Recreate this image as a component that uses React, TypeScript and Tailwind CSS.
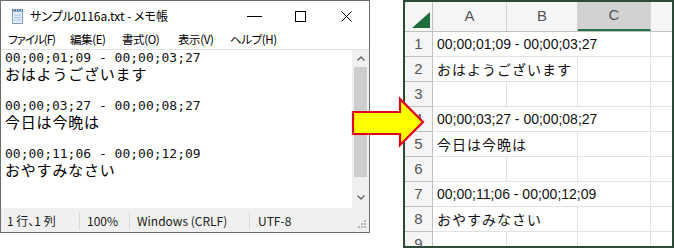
import React from 'react';

const jp = "font-['Noto_Sans_CJK_JP',sans-serif]";
const ui = "font-['Noto_Sans_CJK_JP',sans-serif] [font-feature-settings:'palt']";

const noteLines = [
  { text: '00;00;01;09 - 00;00;03;27', kana: false },
  { text: 'おはようございます', kana: true },
  { text: '', kana: false },
  { text: '00;00;03;27 - 00;00;08;27', kana: false },
  { text: '今日は今晩は', kana: true },
  { text: '', kana: false },
  { text: '00;00;11;06 - 00;00;12;09', kana: false },
  { text: 'おやすみなさい', kana: true },
];

// span = how many columns the text runs over (hides those grid lines)
const sheetRows = [
  { n: 1, text: '00;00;01;09 - 00;00;03;27', span: 3, kana: false },
  { n: 2, text: 'おはようございます', span: 2, kana: true },
  { n: 3, text: '', span: 1, kana: false },
  { n: 4, text: '00;00;03;27 - 00;00;08;27', span: 3, kana: false },
  { n: 5, text: '今日は今晩は', span: 2, kana: true },
  { n: 6, text: '', span: 1, kana: false },
  { n: 7, text: '00;00;11;06 - 00;00;12;09', span: 3, kana: false },
  { n: 8, text: 'おやすみなさい', span: 2, kana: true },
  { n: 9, text: '', span: 1, kana: false },
];

const NotepadIcon = () => (
  <svg width="14" height="16" viewBox="0 0 14 16">
    <path d="M2.5 3.5 L12.5 2.5 L12.5 15.5 L2.5 15.5 Z" fill="#e4eef8" stroke="#7d9cc0" />
    <path d="M4 7h7M4 9.5h7M4 12h7" stroke="#a9c0da" />
    <rect x="2" y="1" width="11" height="2.5" fill="#4d77a6" />
    <path d="M4 0.5v3M6.5 0.5v3M9 0.5v3M11.5 0.5v3" stroke="#c9d6e4" />
  </svg>
);

const Chevron = ({ up }: { up?: boolean }) => (
  <svg width="8" height="5" viewBox="0 0 8 5">
    <path d={up ? 'M0.5 4.5 L4 1 L7.5 4.5' : 'M0.5 0.5 L4 4 L7.5 0.5'} fill="none" stroke="#606060" strokeWidth="1.3" />
  </svg>
);

const Notepad = () => (
  <div className="flex h-[233px] w-[370px] flex-col border border-[#6e6e6e] bg-white">
    {/* title bar */}
    <div className="flex h-[30px] items-center">
      <div className="ml-[9px] flex w-[20px] items-center">
        <NotepadIcon />
      </div>
      <div className={`${ui} text-[12px] text-black`}>サンプル0116a.txt - メモ帳</div>
      <div className="ml-auto flex h-full">
        <div className="flex h-full w-[46px] items-center justify-center">
          <div className="h-px w-[15px] bg-black" />
        </div>
        <div className="flex h-full w-[46px] items-center justify-center">
          <div className="h-[11px] w-[11px] border border-black" />
        </div>
        <div className="flex h-full w-[46px] items-center justify-center">
          <svg width="11" height="11" viewBox="0 0 11 11">
            <path d="M0.5 0.5 L10.5 10.5 M10.5 0.5 L0.5 10.5" stroke="#000" strokeWidth="1" />
          </svg>
        </div>
      </div>
    </div>

    {/* menu */}
    <div className={`${ui} flex h-[18px] items-center pl-[7px] text-[11.5px] tracking-[-0.4px] text-black`}>
      <span className="w-[62px] tracking-[-1px]">ファイル(F)</span>
      <span className="w-[52px]">編集(E)</span>
      <span className="w-[56px]">書式(O)</span>
      <span className="w-[52px]">表示(V)</span>
      <span>ヘルプ(H)</span>
    </div>

    {/* edit area */}
    <div className="flex flex-1 border-t border-[#e3e3e3]">
      <div className="flex-1 overflow-hidden pl-[4px] text-black">
        {noteLines.map((l, i) => (
          <div
            key={i}
            className={
              l.kana
                ? `${jp} h-[16px] whitespace-pre text-[15px] leading-[16px] tracking-[0.8px]`
                : "h-[16px] whitespace-pre font-['DejaVu_Sans_Mono',monospace] text-[13px] leading-[16px] text-[#111]"
            }
          >
            {l.text}
          </div>
        ))}
      </div>
      <div className="flex w-[17px] flex-col items-center bg-[#f0f0f0] pb-[2px]">
        <div className="flex h-[17px] items-center justify-center">
          <Chevron up />
        </div>
        <div className="h-[110px] w-[13px] bg-[#cdcdcd]" />
        <div className="flex-1" />
        <div className="flex h-[17px] items-center justify-center">
          <Chevron />
        </div>
      </div>
    </div>

    {/* status bar */}
    <div className={`${ui} flex h-[24px] items-center border-t border-[#f0f0f0] bg-[#f0f0f0] text-[12px] text-[#1a1a1a]`}>
      <div className="w-[78px] pl-[6px]">1 行、1 列</div>
      <div className="w-[50px] border-l border-[#d9d9d9] pl-[7px]">100%</div>
      <div className="w-[120px] border-l border-[#d9d9d9] pl-[7px]">Windows (CRLF)</div>
      <div className="flex-1 border-l border-[#d9d9d9] pl-[8px]">UTF-8</div>
      <svg width="12" height="12" viewBox="0 0 12 12" className="mr-[2px] mt-[8px]">
        <g fill="#b8b8b8">
          <rect x="9" y="1" width="2" height="2" />
          <rect x="6" y="4" width="2" height="2" />
          <rect x="9" y="4" width="2" height="2" />
          <rect x="3" y="7" width="2" height="2" />
          <rect x="6" y="7" width="2" height="2" />
          <rect x="9" y="7" width="2" height="2" />
        </g>
      </svg>
    </div>
  </div>
);

const colWidths = ['w-[74px]', 'w-[71px]', 'w-[73px]'];

const Sheet = () => (
  <div className="h-[248px] w-[271px] overflow-hidden border-2 border-[#2d4a37] bg-white">
    {/* column headers */}
    <div className="flex h-[30px] border-b border-[#c0c0c0] bg-[#f5f5f5]">
      <div className="flex w-[28px] items-end justify-end border-r border-[#c0c0c0] pb-[3px] pr-[2px]">
        <svg width="18" height="16" viewBox="0 0 18 16">
          <path d="M0 16 L18 16 L18 0 Z" fill="#1f6b3a" />
        </svg>
      </div>
      {['A', 'B', 'C'].map((c, i) => (
        <div
          key={c}
          className={`${colWidths[i]} flex items-center justify-center border-r border-[#d4d4d4] font-['Liberation_Sans',sans-serif] text-[15px] text-[#555] ${
            c === 'C' ? 'border-b-2 border-b-[#217346] bg-[#d2d2d2]' : ''
          }`}
        >
          {c}
        </div>
      ))}
      <div className="flex-1" />
    </div>

    {sheetRows.map((r) => (
      <div key={r.n} className="flex h-[25px]">
        <div className="flex w-[28px] items-center justify-center border-r border-b border-[#c0c0c0] bg-[#f5f5f5] font-['Liberation_Sans',sans-serif] text-[15px] text-[#555]">
          {r.n}
        </div>
        {colWidths.map((w, i) => (
          <div
            key={i}
            className={`${w} relative flex items-center border-b border-[#e1e1e1] ${
              i < r.span - 1 ? '' : 'border-r'
            } border-r-[#e1e1e1]`}
          >
            {i === 0 && r.text && (
              <span
                className={
                  r.kana
                    ? `${jp} whitespace-nowrap pl-[4px] text-[14px] tracking-[1px] text-[#111]`
                    : "whitespace-nowrap pl-[4px] font-['Liberation_Sans','Noto_Sans_CJK_JP',sans-serif] text-[14px] text-[#111]"
                }
              >
                {r.text}
              </span>
            )}
          </div>
        ))}
        <div className="flex-1 border-b border-[#e1e1e1]" />
      </div>
    ))}
  </div>
);

export default function App() {
  return (
    <div className="relative flex h-[248px] w-[674px] items-start overflow-hidden bg-white">
      <Notepad />
      <div className="ml-[33px]">
        <Sheet />
      </div>

      {/* arrow lying over both windows */}
      <svg width="80" height="56" viewBox="0 0 80 56" className="absolute left-[350px] top-[96px]">
        <path
          d="M3 16 L50 16 L50 3 L73 26 L50 49 L50 38 L3 38 Z"
          fill="#ffff00"
          stroke="#e0001a"
          strokeWidth="2.2"
          strokeLinejoin="miter"
        />
      </svg>
    </div>
  );
}
